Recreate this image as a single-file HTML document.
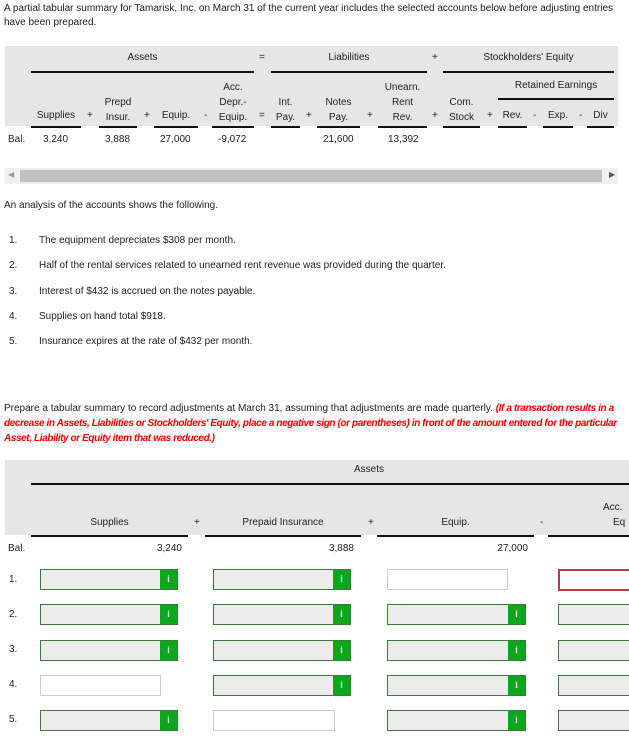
<!DOCTYPE html>
<html><head><style>
body{margin:0;width:629px;height:749px;overflow:hidden;background:#fff;font-family:"Liberation Sans",sans-serif;font-size:10px;color:#222;position:relative;letter-spacing:0}
.a{position:absolute;white-space:nowrap}
.ln{position:absolute;height:2px;background:#111}
.gray{position:absolute;background:#e6e6e6}
.c{text-align:center}
.r{text-align:right}
.box{position:absolute;height:19px;border:1px solid #3c7a3c;background:#ececec}
.wb{position:absolute;height:19px;border:1px solid #ccc;background:#fff}
.rb{position:absolute;height:18px;border:2px solid #b04040;background:#fff}
.btn{position:absolute;top:0;right:0;width:17px;height:19px;background:#0aa81a;color:#fff;font-size:9px;font-weight:bold;text-align:center;line-height:19px}
</style></head><body>
<div class="a" style="left:4px;top:2px;line-height:14px;white-space:normal;width:612px">A partial tabular summary for Tamarisk, Inc. on March 31 of the current year includes the selected accounts below before adjusting entries have been prepared.</div>

<div class="gray" style="left:5px;top:46px;width:613px;height:80px"></div>
<div class="a c" style="left:31px;width:223px;top:52px">Assets</div>
<div class="a" style="left:259px;top:52px">=</div>
<div class="a c" style="left:271px;width:156px;top:52px">Liabilities</div>
<div class="a" style="left:432px;top:52px">+</div>
<div class="a c" style="left:443px;width:171px;top:52px">Stockholders' Equity</div>
<div class="ln" style="left:31px;width:223px;top:71px"></div>
<div class="ln" style="left:271px;width:156px;top:71px"></div>
<div class="ln" style="left:443px;width:171px;top:71px"></div>
<div class="a c" style="left:498px;width:116px;top:80px">Retained Earnings</div>
<div class="ln" style="left:498px;width:116px;top:98px"></div>

<div class="a c" style="left:212px;width:42px;top:80px;line-height:15px">Acc.<br>Depr.-<br>Equip.</div>
<div class="a c" style="left:378px;width:49px;top:80px;line-height:15px">Unearn.<br>Rent<br>Rev.</div>
<div class="a c" style="left:99px;width:38px;top:95px;line-height:15px">Prepd<br>Insur.</div>
<div class="a c" style="left:271px;width:29px;top:95px;line-height:15px">Int.<br>Pay.</div>
<div class="a c" style="left:317px;width:43px;top:95px;line-height:15px">Notes<br>Pay.</div>
<div class="a c" style="left:443px;width:37px;top:95px;line-height:15px">Com.<br>Stock</div>
<div class="a c" style="left:31px;width:50px;top:110px">Supplies</div>
<div class="a c" style="left:154px;width:44px;top:110px">Equip.</div>
<div class="a c" style="left:498px;width:29px;top:110px">Rev.</div>
<div class="a c" style="left:543px;width:30px;top:110px">Exp.</div>
<div class="a c" style="left:587px;width:27px;top:110px">Div</div>
<div class="a" style="left:87px;top:110px">+</div>
<div class="a" style="left:144px;top:110px">+</div>
<div class="a" style="left:204px;top:110px">-</div>
<div class="a" style="left:259px;top:110px">=</div>
<div class="a" style="left:306px;top:110px">+</div>
<div class="a" style="left:367px;top:110px">+</div>
<div class="a" style="left:432px;top:110px">+</div>
<div class="a" style="left:487px;top:110px">+</div>
<div class="a" style="left:533px;top:110px">-</div>
<div class="a" style="left:579px;top:110px">-</div>
<div class="ln" style="left:31px;width:50px;top:126px"></div>
<div class="ln" style="left:99px;width:38px;top:126px"></div>
<div class="ln" style="left:154px;width:44px;top:126px"></div>
<div class="ln" style="left:212px;width:42px;top:126px"></div>
<div class="ln" style="left:271px;width:29px;top:126px"></div>
<div class="ln" style="left:317px;width:43px;top:126px"></div>
<div class="ln" style="left:378px;width:49px;top:126px"></div>
<div class="ln" style="left:443px;width:37px;top:126px"></div>
<div class="ln" style="left:498px;width:29px;top:126px"></div>
<div class="ln" style="left:543px;width:30px;top:126px"></div>
<div class="ln" style="left:587px;width:27px;top:126px"></div>
<div class="a" style="left:8px;top:134px">Bal.</div>
<div class="a" style="left:43px;top:134px">3,240</div>
<div class="a" style="left:105px;top:134px">3,888</div>
<div class="a" style="left:160px;top:134px">27,000</div>
<div class="a" style="left:218px;top:134px">-9,072</div>
<div class="a" style="left:323px;top:134px">21,600</div>
<div class="a" style="left:388px;top:134px">13,392</div>

<div class="gray" style="left:5px;top:168px;width:613px;height:16px;background:#f0f0f0"></div>
<div class="gray" style="left:20px;top:170px;width:582px;height:12px;background:#c1c1c1"></div>
<div class="a" style="left:8px;top:170px;font-size:8px;color:#999">◀</div>
<div class="a" style="left:609px;top:170px;font-size:8px;color:#555">▶</div>

<div class="a" style="left:4px;top:200px">An analysis of the accounts shows the following.</div>
<div class="a" style="left:9px;top:235px">1.</div><div class="a" style="left:39px;top:235px">The equipment depreciates $308 per month.</div>
<div class="a" style="left:9px;top:260px">2.</div><div class="a" style="left:39px;top:260px">Half of the rental services related to unearned rent revenue was provided during the quarter.</div>
<div class="a" style="left:9px;top:286px">3.</div><div class="a" style="left:39px;top:286px">Interest of $432 is accrued on the notes payable.</div>
<div class="a" style="left:9px;top:311px">4.</div><div class="a" style="left:39px;top:311px">Supplies on hand total $918.</div>
<div class="a" style="left:9px;top:336px">5.</div><div class="a" style="left:39px;top:336px">Insurance expires at the rate of $432 per month.</div>

<div class="a" style="left:4px;top:401px;white-space:normal;width:622px;line-height:15px">Prepare a tabular summary to record adjustments at March 31, assuming that adjustments are made quarterly. <b><i style="color:#e00;letter-spacing:-0.4px">(If a transaction results in a decrease in Assets, Liabilities or Stockholders' Equity, place a negative sign (or parentheses) in front of the amount entered for the particular Asset, Liability or Equity item that was reduced.)</i></b></div>

<div class="gray" style="left:5px;top:460px;width:624px;height:75px"></div>
<div class="a c" style="left:31px;width:676px;top:464px">Assets</div>
<div class="ln" style="left:31px;width:598px;top:483px"></div>
<div class="a c" style="left:31px;width:157px;top:517px">Supplies</div>
<div class="a" style="left:194px;top:517px">+</div>
<div class="a c" style="left:205px;width:156px;top:517px">Prepaid Insurance</div>
<div class="a" style="left:368px;top:517px">+</div>
<div class="a c" style="left:377px;width:157px;top:517px">Equip.</div>
<div class="a" style="left:540px;top:517px">-</div>
<div class="a" style="left:603px;top:502px">Acc.</div>
<div class="a" style="left:613px;top:517px">Eq</div>
<div class="ln" style="left:31px;width:157px;top:535px"></div>
<div class="ln" style="left:205px;width:156px;top:535px"></div>
<div class="ln" style="left:377px;width:157px;top:535px"></div>
<div class="ln" style="left:548px;width:81px;top:535px"></div>
<div class="a" style="left:8px;top:543px">Bal.</div>
<div class="a r" style="left:100px;width:82px;top:543px">3,240</div>
<div class="a r" style="left:270px;width:84px;top:543px">3,888</div>
<div class="a r" style="left:440px;width:88px;top:543px">27,000</div>

<div class="a" style="left:9px;top:574px">1.</div>
<div class="a" style="left:9px;top:609px">2.</div>
<div class="a" style="left:9px;top:644px">3.</div>
<div class="a" style="left:9px;top:679px">4.</div>
<div class="a" style="left:9px;top:714px">5.</div>

<div class="box" style="left:40px;top:569px;width:136px"><div class="btn">i</div></div>
<div class="box" style="left:213px;top:569px;width:136px"><div class="btn">i</div></div>
<div class="wb" style="left:387px;top:569px;width:119px"></div>
<div class="rb" style="left:558px;top:569px;width:80px"></div>

<div class="box" style="left:40px;top:604px;width:136px"><div class="btn">i</div></div>
<div class="box" style="left:213px;top:604px;width:136px"><div class="btn">i</div></div>
<div class="box" style="left:387px;top:604px;width:137px"><div class="btn">i</div></div>
<div class="box" style="left:558px;top:604px;width:80px"></div>

<div class="box" style="left:40px;top:640px;width:136px"><div class="btn">i</div></div>
<div class="box" style="left:213px;top:640px;width:136px"><div class="btn">i</div></div>
<div class="box" style="left:387px;top:640px;width:137px"><div class="btn">i</div></div>
<div class="box" style="left:558px;top:640px;width:80px"></div>

<div class="wb" style="left:40px;top:675px;width:119px"></div>
<div class="box" style="left:213px;top:675px;width:136px"><div class="btn">i</div></div>
<div class="box" style="left:387px;top:675px;width:137px"><div class="btn">i</div></div>
<div class="box" style="left:558px;top:675px;width:80px"></div>

<div class="box" style="left:40px;top:710px;width:136px"><div class="btn">i</div></div>
<div class="wb" style="left:213px;top:710px;width:120px"></div>
<div class="box" style="left:387px;top:710px;width:137px"><div class="btn">i</div></div>
<div class="box" style="left:558px;top:710px;width:80px"></div>
</body></html>
